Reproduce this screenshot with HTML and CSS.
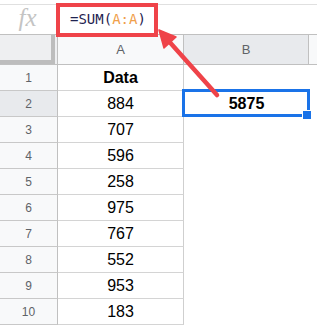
FILE: index.html
```html
<!DOCTYPE html>
<html lang="en">
<head>
  <meta charset="UTF-8" />
  <title>SUM of a whole column</title>
  <link rel="stylesheet" href="styles.css">
</head>
<body>
  <div class="sheet">
    <!-- Formula bar -->
    <div class="formula-bar">
      <div class="fx">fx</div>
      <div class="formula">=SUM(<span class="ref">A:A</span>)</div>
    </div>

    <!-- Grid -->
    <div class="grid">
      <div class="corner"><div class="corner-inner"></div></div>
      <div class="col-head">A</div>
      <div class="col-head selected">B</div>
      <div class="col-head rest"></div>

      <div class="row-head">1</div>
      <div class="cell bold">Data</div>
      <div class="blank"></div>
      <div class="blank"></div>

      <div class="row-head selected">2</div>
      <div class="cell">884</div>
      <div class="blank active">
        <span class="bold">5875</span>
        <div class="selection"><div class="handle"></div></div>
      </div>
      <div class="blank"></div>

      <div class="row-head">3</div><div class="cell">707</div><div class="blank"></div><div class="blank"></div>
      <div class="row-head">4</div><div class="cell">596</div><div class="blank"></div><div class="blank"></div>
      <div class="row-head">5</div><div class="cell">258</div><div class="blank"></div><div class="blank"></div>
      <div class="row-head">6</div><div class="cell">975</div><div class="blank"></div><div class="blank"></div>
      <div class="row-head">7</div><div class="cell">767</div><div class="blank"></div><div class="blank"></div>
      <div class="row-head">8</div><div class="cell">552</div><div class="blank"></div><div class="blank"></div>
      <div class="row-head">9</div><div class="cell">953</div><div class="blank"></div><div class="blank"></div>
      <div class="row-head">10</div><div class="cell">183</div><div class="blank"></div><div class="blank"></div>
    </div>

    <!-- Annotation -->
    <div class="highlight"></div>
    <svg class="arrow" width="317" height="326" viewBox="0 0 317 326">
      <line x1="217" y1="95" x2="166" y2="38" stroke="#ef4349" stroke-width="4.5" stroke-linecap="round" />
      <polygon points="159,30 176,37 164,48" fill="#ef4349" stroke="#ef4349" stroke-width="1.5" stroke-linejoin="round" />
    </svg>
  </div>
</body>
</html>
```

FILE: styles.css
```css
body {
  margin: 0;
  font-family: 'Liberation Sans', Arial, sans-serif;
  background-color: white;
}

.sheet {
  position: relative;
  width: 317px;
  height: 326px;
  padding-top: 4px;
  box-sizing: border-box;
  overflow: hidden;
}

.formula-bar {
  display: flex;
  height: 30px;
  border-top: 1px solid #e0e0e0;
  box-sizing: border-box;
}

.fx {
  width: 55px;
  display: flex;
  align-items: center;
  justify-content: center;
  font-family: 'Liberation Serif', serif;
  font-style: italic;
  font-size: 25px;
  color: #c4c4c4;
  padding-bottom: 3px;
}

.formula {
  flex: 1;
  display: flex;
  align-items: center;
  padding-left: 15px;
  padding-bottom: 1px;
  font-family: 'DejaVu Sans Mono', monospace;
  font-size: 14px;
  color: #1f2350;
}

.formula .ref {
  color: #f0a04b;
}

.grid {
  display: grid;
  grid-template-columns: 58px 126px 125px 1fr;
  grid-template-rows: 31px;
  grid-auto-rows: 26px;
}

.grid > div {
  box-sizing: border-box;
}

.corner {
  background-color: #eeeff1;
  border-top: 1px solid #c0c0c0;
  border-bottom: 1px solid #c0c0c0;
  border-right: 1px solid #c0c0c0;
}

.corner-inner {
  width: 55px;
  height: 29px;
  box-sizing: border-box;
  border-right: 4px solid #bdbdbd;
  border-bottom: 4px solid #bdbdbd;
}

.col-head {
  display: flex;
  align-items: center;
  justify-content: center;
  background-color: #f8f9fa;
  border-top: 1px solid #c0c0c0;
  border-bottom: 1px solid #c0c0c0;
  border-right: 1px solid #c0c0c0;
  font-size: 13px;
  color: #5f6368;
}

.col-head.selected {
  background-color: #e8eaed;
}

.col-head.rest {
  border-right: none;
}

.row-head {
  display: flex;
  align-items: center;
  justify-content: center;
  background-color: #f8f9fa;
  border-right: 1px solid #c0c0c0;
  border-bottom: 1px solid #c8c8c8;
  font-size: 12px;
  color: #5f6368;
}

.row-head.selected {
  background-color: #e8eaed;
}

.cell {
  display: flex;
  align-items: center;
  justify-content: center;
  border-right: 1px solid #cfcfcf;
  border-bottom: 1px solid #d4d4d4;
  font-size: 16px;
  color: #000;
}

.bold {
  font-weight: bold;
}

.blank {
  background-color: white;
}

.blank.active {
  position: relative;
  display: flex;
  align-items: center;
  justify-content: center;
  font-size: 16px;
}

.selection {
  position: absolute;
  left: -2px;
  top: -2px;
  width: 128px;
  height: 28px;
  border: 3px solid #1a73e8;
  box-sizing: border-box;
}

.handle {
  position: absolute;
  right: -5px;
  bottom: -6px;
  width: 8px;
  height: 8px;
  background-color: #1a73e8;
  border: 1px solid white;
}

.highlight {
  position: absolute;
  left: 56px;
  top: 3px;
  width: 102px;
  height: 34px;
  border: 4px solid #ef4349;
  box-sizing: border-box;
}

.arrow {
  position: absolute;
  left: 0;
  top: 0;
}
```
